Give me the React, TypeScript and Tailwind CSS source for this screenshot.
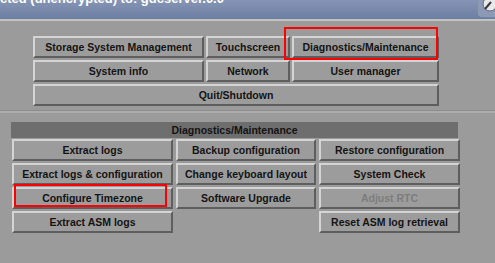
import React from "react";

const Btn = ({ label, disabled = false, className = "" }: { label: string; disabled?: boolean; className?: string }) => (
  <div
    className={`flex items-center justify-center h-[22px] bg-[#9c9c9c] border-2 border-t-[#d4d4d4] border-l-[#d4d4d4] border-b-[#5e5e5e] border-r-[#5e5e5e] text-[10.5px] font-bold leading-none whitespace-nowrap ${
      disabled ? "text-[#7c7c7c]" : "text-[#141414]"
    } ${className}`}
  >
    {label}
  </div>
);

export default function App() {
  return (
    <div
      className="relative w-[495px] h-[263px] overflow-hidden bg-[#9b9b9b]"
      style={{ fontFamily: '"Liberation Sans", Arial, sans-serif' }}
    >
      {/* title bar */}
      <div className="relative h-[19px] bg-gradient-to-b from-[#8695b5] to-[#6c7fa2] overflow-hidden">
        <div className="mt-[-9px] text-[13px] font-bold text-white whitespace-nowrap leading-[16px]">
          cted (unencrypted) to: gdcserver.0.0
        </div>
        <div className="absolute right-0 top-0 w-[17px] h-[17px] rounded-bl-[4px] bg-[#8d9ab6] flex items-start justify-end">
          <svg width="14" height="14" viewBox="0 0 14 14">
            <circle cx="9" cy="4" r="7" fill="#e8e8e8" stroke="#5a6680" strokeWidth="1" />
            <path d="M4 9 L10 2" stroke="#3a3a3a" strokeWidth="2" />
          </svg>
        </div>
      </div>
      <div className="h-[2px] bg-[#c2c2c2]" />

      {/* top panel */}
      <div className="pl-[33px] pt-[15px]">
        <div className="grid grid-cols-[171px_84px_147px] gap-x-[2px] gap-y-[2px] w-max">
          <Btn label="Storage System Management" />
          <Btn label="Touchscreen" />
          <Btn label="Diagnostics/Maintenance" />
          <Btn label="System info" />
          <Btn label="Network" />
          <Btn label="User manager" />
          <Btn label="Quit/Shutdown" className="col-span-3" />
        </div>
      </div>

      <div className="mt-[4px] h-[3px] bg-[#acacac] border-t border-[#8c8c8c]" />

      {/* bottom panel */}
      <div className="pl-[11px] pt-[9px] w-[458px]">
        <div className="h-[16px] bg-[#6e6e6e] flex items-center justify-center text-[10.5px] font-bold text-[#141414] leading-none">
          Diagnostics/Maintenance
        </div>
        <div className="grid grid-cols-[161px_140px_141px] gap-x-[3px] gap-y-[2px] pl-[1px] pt-[1px] w-max">
          <Btn label="Extract logs" />
          <Btn label="Backup configuration" />
          <Btn label="Restore configuration" />
          <Btn label="Extract logs & configuration" />
          <Btn label="Change keyboard layout" />
          <Btn label="System Check" />
          <Btn label="Configure Timezone" />
          <Btn label="Software Upgrade" />
          <Btn label="Adjust RTC" disabled />
          <Btn label="Extract ASM logs" />
          <div />
          <Btn label="Reset ASM log retrieval" />
        </div>
      </div>

      {/* red highlight boxes */}
      <div className="absolute left-[284px] top-[27px] w-[154px] h-[33px] border-2 border-[#ff0000]" />
      <div className="absolute left-[14px] top-[184px] w-[153px] h-[23px] border-2 border-[#ff0000]" />
    </div>
  );
}
